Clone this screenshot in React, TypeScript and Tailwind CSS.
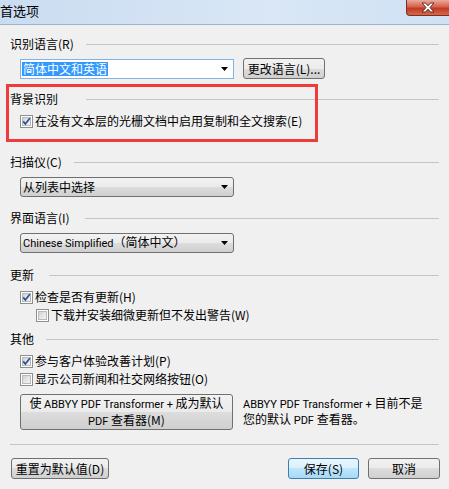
import { ReactNode } from "react";

// Win7-style button face
const btnFace =
  "bg-[linear-gradient(#f2f2f2_0%,#ebebeb_50%,#dddddd_50%,#cfcfcf_100%)] border border-[#707070] rounded-[3px]";

// Latin runs are set narrower than the CJK text, like Segoe UI next to YaHei
function L({ children }: { children: ReactNode }) {
  return <span className="font-['Roboto',sans-serif] text-[11px]">{children}</span>;
}

function Header({ label, lineStart, className }: { label: string; lineStart: string; className: string }) {
  return (
    <div className={`flex items-center h-[16px] ${className}`}>
      <span className={`shrink-0 whitespace-nowrap ${lineStart}`}>{label}</span>
      <div className="flex-1 h-px bg-[#c4c4c4]" />
    </div>
  );
}

function CheckBox({ checked }: { checked: boolean }) {
  return (
    <svg width="13" height="13" viewBox="0 0 13 13" className="shrink-0">
      <defs>
        <linearGradient id="cbg" x1="0" y1="0" x2="1" y2="1">
          <stop offset="0" stopColor="#cfd2d6" />
          <stop offset="1" stopColor="#f7f7f7" />
        </linearGradient>
      </defs>
      <rect x="0.5" y="0.5" width="12" height="12" fill="#fff" stroke="#8e8f8f" />
      <rect x="2.5" y="2.5" width="8" height="8" fill="url(#cbg)" stroke="#b8b9bb" />
      {checked && (
        <path d="M3.2 6.4 L5.4 9 L9.8 3.2" fill="none" stroke="#2c4f8f" strokeWidth="1.7" />
      )}
    </svg>
  );
}

function Check({ checked, label, className }: { checked: boolean; label: string; className: string }) {
  return (
    <div className={`flex items-center gap-[2px] h-[16px] ${className}`}>
      <CheckBox checked={checked} />
      <span className="whitespace-nowrap">{label}</span>
    </div>
  );
}

function Arrow() {
  return (
    <svg width="7" height="4" viewBox="0 0 7 4" className="shrink-0">
      <path d="M0 0 H7 L3.5 4 Z" fill="#000" />
    </svg>
  );
}

function DropList({ children, className }: { children: ReactNode; className: string }) {
  return (
    <div className={`ml-[10px] w-[214px] h-[20px] flex items-center pl-[2px] pr-[5px] ${btnFace} ${className}`}>
      <span className="flex-1 whitespace-nowrap">{children}</span>
      <Arrow />
    </div>
  );
}

function TitleBar() {
  return (
    <div className="h-[25px] flex justify-between bg-[linear-gradient(90deg,#cadcf1,#d9e7f6_60%,#cfe1f4)] border-b border-[#9fb3ca]">
      <span className="text-[13px] leading-[22px]">首选项</span>
      <div className="w-[43px] h-[16px] rounded-bl-[4px] border-l border-b border-[#7a2f26] bg-[linear-gradient(#e9a99b,#d4624c_45%,#c23a22_55%,#d6674a)] flex items-center justify-center">
        <svg width="14" height="11" viewBox="0 0 14 11">
          <path
            d="M1 1 H4.5 L7 3.8 L9.5 1 H13 L9 5.5 L13 10 H9.5 L7 7.2 L4.5 10 H1 L5 5.5 Z"
            fill="#fff"
            stroke="#5b2a24"
            strokeWidth="1"
            strokeLinejoin="round"
          />
        </svg>
      </div>
    </div>
  );
}

export default function App() {
  return (
    <div className="relative w-[449px] h-[489px] overflow-hidden bg-[#f0f0f0] text-black text-[12px] leading-[16px] font-['Noto_Sans_CJK_SC',sans-serif]">
      <TitleBar />

      <div className="px-[10px]">
        <Header label="识别语言(R)" lineStart="w-[76px]" className="mt-[11px]" />
        <div className="mt-[6px] flex items-start">
          <div className="ml-[10px] mt-[1px] w-[214px] h-[20px] bg-white border border-[#7eb4ea] flex items-center pl-[1px] pr-[5px]">
            <span className="flex-1">
              <span className="bg-[#3399ff] text-white px-[1px] leading-[14px] inline-block">简体中文和英语</span>
            </span>
            <Arrow />
          </div>
          <button className={`ml-[9px] w-[82px] h-[21px] leading-[16px] ${btnFace}`}>更改语言(L)...</button>
        </div>

        <Header label="背景识别" lineStart="w-[76px]" className="mt-[12px]" />
        <Check checked label="在没有文本层的光栅文档中启用复制和全文搜索(E)" className="mt-[6px] ml-[10px]" />

        <Header label="扫描仪(C)" lineStart="w-[64px]" className="mt-[25px]" />
        <DropList className="mt-[7px]">从列表中选择</DropList>

        <Header label="界面语言(I)" lineStart="w-[75px]" className="mt-[13px]" />
        <DropList className="mt-[7px]">
          <L>Chinese Simplified</L>（简体中文）
        </DropList>

        <Header label="更新" lineStart="w-[39px]" className="mt-[14px]" />
        <Check checked label="检查是否有更新(H)" className="mt-[6px] ml-[10px]" />
        <Check checked={false} label="下载并安装细微更新但不发出警告(W)" className="mt-[2px] ml-[26px]" />

        <Header label="其他" lineStart="w-[36px]" className="mt-[8px]" />
        <Check checked label="参与客户体验改善计划(P)" className="mt-[6px] ml-[10px]" />
        <Check checked={false} label="显示公司新闻和社交网络按钮(O)" className="mt-[2px] ml-[10px]" />

        <div className="mt-[7px] flex items-center">
          <button className={`ml-[10px] w-[213px] h-[36px] leading-[15px] whitespace-nowrap ${btnFace}`}>
            使 <L>ABBYY PDF Transformer +</L> 成为默认
            <br />
            <L>PDF</L> 查看器(M)
          </button>
          <p className="ml-[10px] leading-[14px] whitespace-nowrap">
            <L>ABBYY PDF Transformer +</L> 目前不是
            <br />
            您的默认 <L>PDF</L> 查看器。
          </p>
        </div>

        <div className="mt-[14px] h-px bg-[#c4c4c4]" />

        <div className="mt-[13px] flex items-center">
          <button className={`ml-[1px] w-[98px] h-[21px] ${btnFace}`}>重置为默认值(D)</button>
          <button className="ml-auto w-[71px] h-[21px] rounded-[3px] border border-[#3c7fb1] bg-[linear-gradient(#eaf6fd_0%,#d9f0fc_50%,#bee6fd_50%,#a7d9f5_100%)]">
            保存(S)
          </button>
          <button className={`ml-[9px] mr-[-1px] w-[72px] h-[21px] ${btnFace}`}>取消</button>
        </div>
      </div>

      {/* red annotation box */}
      <div className="absolute left-[6px] top-[84px] w-[312px] h-[58px] border-[3px] border-[#ef3b3b] pointer-events-none" />
    </div>
  );
}
